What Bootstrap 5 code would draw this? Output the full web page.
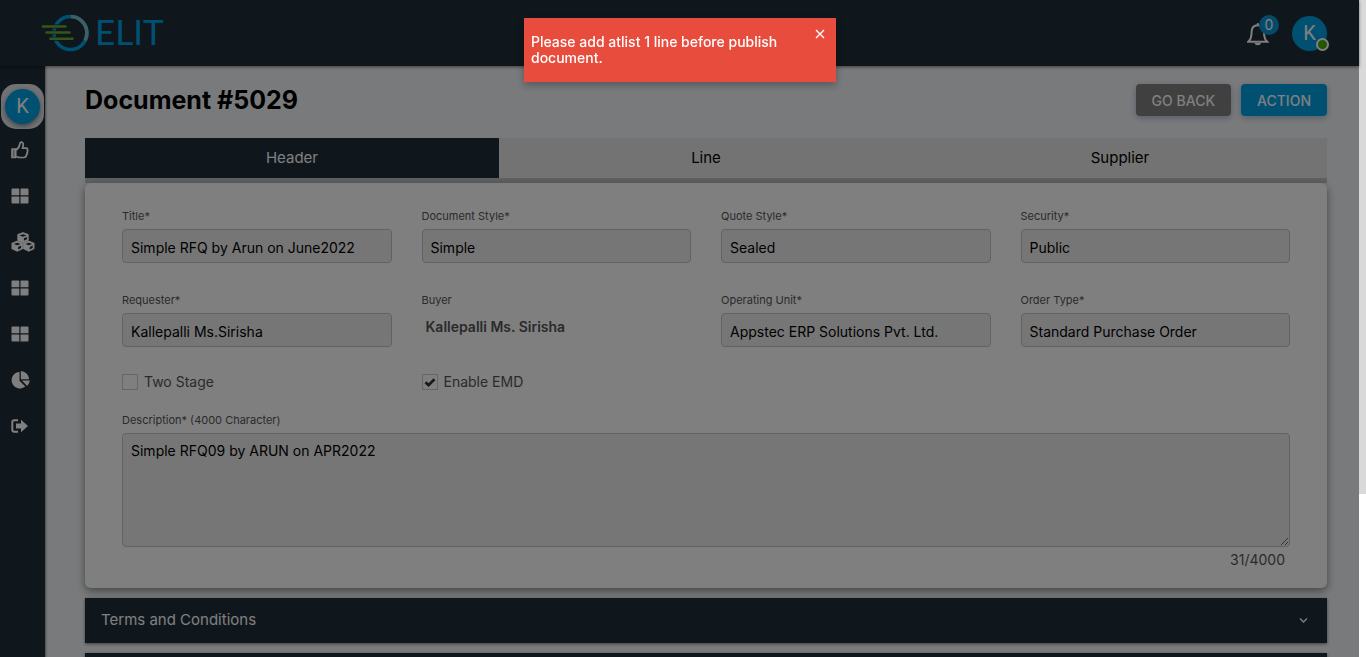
<!DOCTYPE html>
<html lang="en">
<head>
<meta charset="utf-8">
<meta name="viewport" content="width=device-width, initial-scale=1">
<title>Document #5029 - ELIT</title>
<link href="https://cdn.jsdelivr.net/npm/bootstrap@5.3.0/dist/css/bootstrap.min.css" rel="stylesheet">
<style>
  :root { --navy: #1e2d39; --brand: #00a1e4; --ink: #333; --muted: #555; }
  body { font-family: Inter, "Open Sans", sans-serif; font-size: 14px; line-height: 20px; color: var(--ink); background: #f3f5f8; }
  .shell { height: 100vh; overflow: hidden; }
  .scroll-track { width: 7px; background: #fff; }
  .scroll-thumb { height: 75.2%; background: #d9d9d9; }
  .topbar { height: 66px; background: var(--navy); padding: 0 32px 0 41px; box-shadow: 0 1px 3px rgba(0,0,0,.5); z-index: 2; }
  .brand-name { font-family: Lato, sans-serif; font-size: 35px; line-height: 40px; padding-bottom: 4px; color: var(--brand); }
  .avatar { width: 35px; height: 35px; border-radius: 50%; background: var(--brand); color: #fff; font: 20px/35px Roboto, sans-serif; text-align: center; }
  .presence { right: -2px; bottom: 0; width: 13px; height: 13px; border-radius: 50%; background: #48ad00; border: 2px solid #fff; }
  .bell-btn { margin-right: 23px; }
  .bell-count { left: 12px; top: -5px; width: 20px; height: 20px; border-radius: 50%; background: #0d95d2; color: #fff; font: 14px/20px Inter, sans-serif; text-align: center; }
  .sidebar { width: 45px; background: var(--navy); padding-top: 18px; box-shadow: 1px 0 2px rgba(0,0,0,.4); z-index: 1; }
  .side-user { width: 43px; height: 45px; margin: 0 0 -2px 1px; padding: 5px 4px; border-radius: 15px; background: #e3e5ea; }
  .side-user .avatar { box-shadow: 0 2px 5px rgba(0,0,0,.45); }
  .side-link { display: flex; align-items: center; height: 46px; padding-left: 11px; color: #fff; }
  .page-body { padding: 18px 32px 0 40px; }
  .page-title { font-size: 25px; line-height: 32px; font-weight: 700; color: #000; }
  .page-actions { gap: 10px; }
  .page-btn { height: 32px; padding: 0 16px; border: 0; border-radius: 4px; font-size: 14px; line-height: 34px; font-weight: 500; color: #fff; box-shadow: 0 2px 6px rgba(60,90,150,.4); }
  .page-btn:hover { color: #fff; }
  .btn-grey { background: #808080; } .btn-brand { background: var(--brand); }
  .doc-tabs { margin-top: 22px; border-bottom: 5px solid #c0c4c4; background: #e6e6e6; }
  .doc-tabs .nav-link { height: 40px; padding: 0; font-size: 15px; line-height: 40px; border-radius: 0; color: #000; }
  .doc-tabs .nav-link.active { background: var(--navy); color: #fff; }
  .doc-wrap { background: #c0c4c4; }
  .panel { background: #fff; border-radius: 6px; padding: 23px 37px 17px; box-shadow: 0 3px 8px rgba(0,0,0,.45); }
  .panel .row { --bs-gutter-x: 30px; }
  .field { height: 84px; }
  .field-label { display: block; font-size: 11px; line-height: 20px; height: 23px; color: var(--muted); }
  .field-box { height: 34px; padding: 2px 8px 0; border: 1px solid #c4c4c4; border-radius: 4px; background: #ededed; font-size: 14px; color: #000; }
  .field-box:focus { background: #ededed; }
  .area-box { height: 114px; padding-top: 7px; line-height: 20px; }
  .buyer-name { padding: 4px 0 0 4px; font-weight: 600; color: var(--muted); }
  .tick { appearance: none; width: 16px; height: 16px; margin: 0; border: 1px solid #ccc; background: #fff; }
  .tick:checked { background: #fff url("data:image/svg+xml,%3Csvg xmlns='http://www.w3.org/2000/svg' viewBox='0 0 14 14'%3E%3Cpath d='M2.500 7.200l3 3 6-6' fill='none' stroke='%23333' stroke-width='2.700'/%3E%3C/svg%3E"); }
  .checks { height: 36px; }
  .check-pair { display: flex; align-items: center; gap: 6px; height: 20px; margin-top: -2px; }
  .check-pair label { color: var(--muted); }
  .counter { padding: 3px 5px 1px 0; color: var(--muted); }
  .fold { height: 45px; margin-top: 10px; padding: 0 19px 0 16px; border: 0; border-radius: 0; background: var(--navy); color: #fff; font-size: 15px; box-shadow: 0 1px 3px rgba(0,0,0,.5); }
  .dimmer { position: fixed; inset: 0 7px 0 0; background: rgba(0,0,0,.5); z-index: 10; }
  .alert-toast { position: fixed; top: 18px; left: calc(50% - 159px); width: 312px; height: 64px; padding: 16px 40px 0 7px; background: #e84c3d; color: #fff; font-size: 14px; line-height: 16px; font-weight: 500; z-index: 11; box-shadow: 0 3px 8px rgba(0,0,0,.3); }
  .toast-x { position: absolute; top: 10px; right: 10px; width: 12px; height: 12px; padding: 0; border: 0; background: none; color: #fff; line-height: 0; }
</style>
</head>
<body>
<svg class="d-none">
  <symbol id="tiles" viewBox="0 0 18 16"><path fill="currentColor" d="M1.500 .5h6.200q.6 0 .6.600v6.200H.5V1.500q0-1 1-1zM10.200.5h6.300q1 0 1 1v5.800H9.500V1.100q0-.6.700-.6zM.5 8.500h7.800v6.900H1.500q-1 0-1-1zM9.500 8.500h8v5.900q0 1-1 1h-7z"/></symbol>
</svg>
<div class="shell d-flex">
  <div class="d-flex flex-column flex-grow-1">
    <header class="topbar d-flex align-items-center justify-content-between flex-shrink-0">
      <a href="#" class="d-flex align-items-center text-decoration-none" aria-label="ELIT home">
        <svg width="54" height="40" viewBox="0 0 54 40" fill="none">
          <circle cx="29.500" cy="20" r="16.500" stroke="#00a1e4" stroke-width="3.600"/>
          <path d="M30 3.500A16.500 16.500 0 0 1 44 27.500" stroke="#7fbfc4" stroke-width="3.600"/>
          <path d="M1.500 13.500h24M5 19.500h24M9 25.800h23" stroke="#1e2d39" stroke-width="4"/>
          <path d="M2 13.500h22.500M5.500 19.500h23M9.500 25.800h22" stroke="#6bad35" stroke-width="2.600" stroke-linecap="round"/>
        </svg>
        <span class="brand-name">ELIT</span>
      </a>
      <div class="d-flex align-items-center">
        <button class="btn bell-btn p-0 border-0 position-relative text-white" aria-label="Notifications">
          <svg width="22" height="26" viewBox="0 -1 21 25" fill="none" stroke="currentColor" stroke-width="1.900"><path d="M1 20q3.300-2.700 3.300-9C4.300 6.800 6.500 4 10.300 4s6 2.800 6 7q0 6.300 3.200 9z"/><path d="M10.300 2v2"/><path d="M7 21h6.500q-.6 2.300-3.200 2.300T7 21z" fill="currentColor" stroke="none"/></svg>
          <span class="bell-count position-absolute">0</span>
        </button>
        <div class="avatar position-relative">K<span class="presence position-absolute"></span></div>
      </div>
    </header>
    <div class="d-flex flex-grow-1">
      <nav class="sidebar flex-shrink-0" aria-label="Main">
        <div class="side-user"><div class="avatar">K</div></div>
        <a class="side-link" href="#" aria-label="Approvals"><svg width="18" height="18" viewBox="0 0 18 18" fill="none" stroke="currentColor" stroke-width="1.700" stroke-linejoin="round"><path d="M1 8h3.500v8.500H1z" fill="currentColor" fill-opacity=".6"/><path d="M4.500 9c2.500-1 3.800-3 4.200-5.500.2-1.600.8-2.500 1.900-2.400 2 .2 2 3.200.8 6.100h3.800c1.500 0 1.700 1.500 1.100 2.200.6.800.5 1.600-.2 2.200.4.900.1 1.600-.6 2 0 1.800-.8 2.900-2.700 2.900H9c-1.800 0-2.800-.7-4.500-1z"/></svg></a>
        <a class="side-link" href="#" aria-label="Dashboard"><svg width="18" height="16"><use href="#tiles"/></svg></a>
        <a class="side-link" href="#" aria-label="Inventory"><svg width="24" height="20" viewBox="0 0 24 20"><g id="cube"><path d="M12 1l4.800 1.900v5L12 10.200 7.200 7.900v-5z" fill="currentColor" stroke="currentColor" stroke-width="1.800" stroke-linejoin="round"/><path d="M8.600 3.400L12 2.200l3.400 1.200L12 4.700zM12.900 6.300l3-1.300v2.300l-3 1.500z" fill="#1e2d39"/></g><use href="#cube" x="-5.800" y="8.600"/><use href="#cube" x="5.800" y="8.600"/></svg></a>
        <a class="side-link" href="#" aria-label="Sourcing"><svg width="18" height="16"><use href="#tiles"/></svg></a>
        <a class="side-link" href="#" aria-label="Orders"><svg width="18" height="16"><use href="#tiles"/></svg></a>
        <a class="side-link" href="#" aria-label="Reports"><svg width="19" height="18" viewBox="0 0 19 18" fill="currentColor"><path d="M8.500 1v8.700l5.800 5.900A8.300 8.300 0 1 1 8.500 1z"/><path d="M9.800 0a8.500 8.500 0 0 1 8.300 8.300H9.800zM10.800 9.500h8a8 8 0 0 1-2.600 5.400z"/></svg></a>
        <a class="side-link" href="#" aria-label="Sign out"><svg width="18" height="14" viewBox="0 0 18 14"><path d="M7 1.300H3.200Q1.300 1.300 1.300 3.200v7.600q0 1.900 1.900 1.900H7" fill="none" stroke="currentColor" stroke-width="2"/><path fill="currentColor" d="M5 4.500h5V.8L17 7l-7 6.200V9.500H5z"/></svg></a>
      </nav>
      <main class="page-body flex-grow-1">
        <div class="d-flex justify-content-between">
          <h1 class="page-title m-0">Document #5029</h1>
          <div class="page-actions d-flex">
            <button class="btn page-btn btn-grey">GO BACK</button>
            <button class="btn page-btn btn-brand">ACTION</button>
          </div>
        </div>
        <nav class="doc-tabs nav nav-pills nav-fill">
          <a class="nav-link active w-25" href="#">Header</a>
          <a class="nav-link w-25" href="#">Line</a>
          <a class="nav-link w-25" href="#">Supplier</a>
        </nav>
        <form class="panel">
          <div class="row">
            <div class="col-3 field"><label class="field-label" for="f1">Title*</label><input id="f1" class="form-control field-box" value="Simple RFQ by Arun on June2022"></div>
            <div class="col-3 field"><label class="field-label" for="f2">Document Style*</label><input id="f2" class="form-control field-box" value="Simple"></div>
            <div class="col-3 field"><label class="field-label" for="f3">Quote Style*</label><input id="f3" class="form-control field-box" value="Sealed"></div>
            <div class="col-3 field"><label class="field-label" for="f4">Security*</label><input id="f4" class="form-control field-box" value="Public"></div>
            <div class="col-3 field"><label class="field-label" for="f5">Requester*</label><input id="f5" class="form-control field-box" value="Kallepalli Ms.Sirisha"></div>
            <div class="col-3 field"><span class="field-label">Buyer</span><div class="buyer-name">Kallepalli Ms. Sirisha</div></div>
            <div class="col-3 field"><label class="field-label" for="f6">Operating Unit*</label><input id="f6" class="form-control field-box" value="Appstec ERP Solutions Pvt. Ltd."></div>
            <div class="col-3 field"><label class="field-label" for="f7">Order Type*</label><input id="f7" class="form-control field-box" value="Standard Purchase Order"></div>
          </div>
          <div class="row checks">
            <div class="col-3"><div class="check-pair"><input class="tick" type="checkbox" id="two"><label for="two">Two Stage</label></div></div>
            <div class="col-3"><div class="check-pair"><input class="tick" type="checkbox" id="emd" checked><label for="emd">Enable EMD</label></div></div>
          </div>
          <label class="field-label" for="desc">Description* (4000 Character)</label>
          <textarea id="desc" class="form-control field-box area-box">Simple RFQ09 by ARUN on APR2022</textarea>
          <div class="counter text-end">31/4000</div>
        </form>
        <button class="btn fold w-100 d-flex align-items-center justify-content-between"><span>Terms and Conditions</span><svg width="9" height="7" viewBox="0 0 9 7" fill="none" stroke="currentColor" stroke-width="1.400"><path d="M1 1.500l3.500 3.500L8 1.500"/></svg></button>
        <button class="btn fold w-100" aria-label="Attachments"></button>
      </main>
    </div>
  </div>
  <div class="scroll-track flex-shrink-0"><div class="scroll-thumb"></div></div>
</div>
<div class="dimmer"></div>
<div class="alert-toast" role="alert">Please add atlist 1 line before publish document.
  <button class="toast-x" aria-label="Close"><svg width="12" height="12" viewBox="0 0 12 12" stroke="currentColor" stroke-width="1.400"><path d="M2 2l8 8M10 2l-8 8"/></svg></button>
</div>
<script src="https://cdn.jsdelivr.net/npm/bootstrap@5.3.0/dist/js/bootstrap.bundle.min.js"></script>
</body>
</html>
